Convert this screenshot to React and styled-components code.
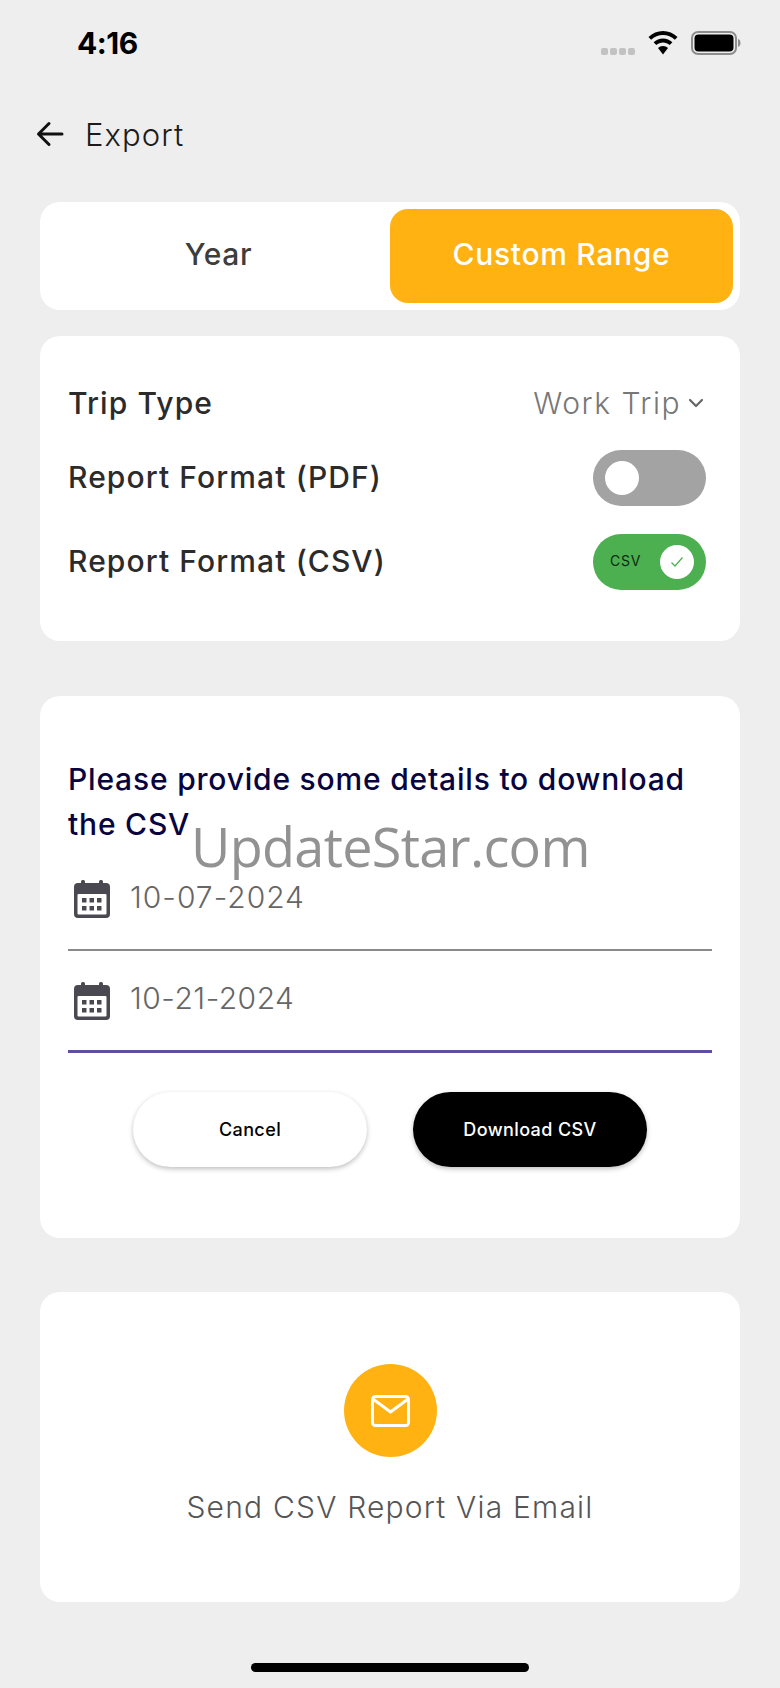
import React from 'react';
import styled, { createGlobalStyle } from 'styled-components';

const GlobalStyle = createGlobalStyle`
	html, body { margin: 0; padding: 0; background: #eeeeee; }
	* { box-sizing: border-box; }
`;

const font = `Inter, "Liberation Sans", sans-serif`;

const Page = styled.div`
	position: relative;
	width: 780px;
	height: 1688px;
	overflow: hidden;
	background: #eeeeee;
	font-family: ${font};
`;

const StatusBar = styled.div`
	display: flex;
	align-items: center;
	justify-content: space-between;
	height: 86px;
	padding: 0 39px 0 77px;
`;

const Time = styled.div`
	font-size: 30px;
	font-weight: 700;
	color: #000;
	letter-spacing: -0.5px;
`;

const StatusIcons = styled.div`
	display: flex;
	align-items: center;
	gap: 13px;
`;

const SignalDots = styled.div`
	display: flex;
	gap: 2px;
	margin-top: 16px;
`;

const SignalDot = styled.span`
	width: 7px;
	height: 7px;
	border-radius: 2px;
	background: #c2c2c2;
`;

const Header = styled.div`
	display: flex;
	align-items: center;
	gap: 21px;
	height: 96px;
	padding-left: 36px;
	margin-bottom: 20px;
`;

const HeaderTitle = styled.div`
	font-size: 31px;
	font-weight: 300;
	color: #1b1b1b;
	letter-spacing: 1.1px;
`;

const Content = styled.div`
	display: flex;
	flex-direction: column;
	padding: 0 40px;
`;

const Card = styled.div`
	background: #fff;
	border-radius: 20px;
	padding: ${(p) => p.$padding};
	margin-bottom: ${(p) => p.$gap || 0}px;
`;

const TabCard = styled(Card)`
	display: grid;
	grid-template-columns: 343px 343px;
	justify-content: space-between;
	height: 108px;
	padding: 7px;
`;

const Tab = styled.div`
	display: flex;
	align-items: center;
	justify-content: center;
	padding-bottom: 4px;
	border-radius: 18px;
	font-size: 30px;
	font-weight: 500;
	letter-spacing: 0.7px;
	background: ${(p) => (p.$active ? '#ffb212' : 'transparent')};
	color: ${(p) => (p.$active ? '#fff' : '#3d3d3d')};
`;

const Row = styled.div`
	display: flex;
	align-items: center;
	justify-content: space-between;
	height: 56px;
	margin-bottom: ${(p) => p.$gap}px;
`;

const RowLabel = styled.div`
	font-size: 30px;
	font-weight: 500;
	color: #2b2b2b;
	letter-spacing: 1.1px;
	margin-top: ${(p) => p.$shift || 0}px;
`;

const Select = styled.div`
	display: flex;
	align-items: center;
	gap: 7px;
	margin-right: 8px;
	font-size: 30px;
	font-weight: 300;
	color: #777;
	letter-spacing: 1.5px;
`;

const Toggle = styled.div`
	display: flex;
	align-items: center;
	justify-content: ${(p) => (p.$on ? 'space-between' : 'flex-start')};
	width: 113px;
	height: 56px;
	margin-right: 6px;
	padding: 0 12px 0 ${(p) => (p.$on ? 17 : 12)}px;
	border-radius: 28px;
	background: ${(p) => (p.$on ? '#4caf50' : '#a3a3a3')};
`;

const ToggleLabel = styled.span`
	font-size: 14px;
	color: #0b2b0f;
	letter-spacing: 0.8px;
	margin-top: -3px;
`;

const Knob = styled.div`
	display: flex;
	align-items: center;
	justify-content: center;
	width: 34px;
	height: 34px;
	border-radius: 50%;
	background: #fff;
`;

const Heading = styled.div`
	font-size: 30px;
	line-height: 45px;
	font-weight: 500;
	color: #07043f;
	letter-spacing: 0.8px;
	margin-bottom: 2px;
`;

const DateField = styled.div`
	display: flex;
	align-items: center;
	gap: 20px;
	height: 102px;
	padding-left: 6px;
	border-bottom: ${(p) => (p.$focused ? '3px solid #5f4ea3' : '2px solid #8a8a8a')};
`;

const DateText = styled.div`
	font-size: 30px;
	font-weight: 300;
	color: #666;
	letter-spacing: ${(p) => p.$spacing}px;
	margin-top: -5px;
`;

const ButtonRow = styled.div`
	display: flex;
	justify-content: center;
	gap: 46px;
	margin-top: 39px;
`;

const Button = styled.div`
	display: flex;
	align-items: center;
	justify-content: center;
	width: 234px;
	height: 75px;
	border-radius: 38px;
	font-size: 18px;
	font-weight: 500;
	letter-spacing: 0.4px;
	background: ${(p) => (p.$dark ? '#000' : '#fff')};
	color: ${(p) => (p.$dark ? '#fff' : '#000')};
	box-shadow: 0 2px 5px rgba(0, 0, 0, 0.25);
`;

const EmailCard = styled(Card)`
	display: flex;
	flex-direction: column;
	align-items: center;
	height: 310px;
	padding-top: 72px;
`;

const MailCircle = styled.div`
	display: flex;
	align-items: center;
	justify-content: center;
	width: 93px;
	height: 93px;
	border-radius: 50%;
	background: #ffb212;
`;

const EmailLabel = styled.div`
	margin-top: 32px;
	font-size: 30px;
	font-weight: 300;
	color: #555;
	letter-spacing: 1.2px;
`;

const HomeBar = styled.div`
	position: absolute;
	left: 251px;
	bottom: 16px;
	width: 278px;
	height: 9px;
	border-radius: 5px;
	background: #000;
`;

const Watermark = styled.div`
	position: absolute;
	left: 191px;
	top: 809px;
	font-family: "Open Sans", sans-serif;
	font-size: 54px;
	line-height: 74px;
	letter-spacing: -0.7px;
	color: rgba(110, 110, 110, 0.75);
	pointer-events: none;
`;

const BackArrow = () => (
	<svg width="28" height="26" viewBox="0 0 28 26" fill="none" stroke="#111" strokeWidth="3" strokeLinecap="round" strokeLinejoin="round">
		<path d="M26 13H3M13 2.500 2.500 13 13 23.500" />
	</svg>
);

const Wifi = () => (
	<svg width="30" height="24" viewBox="0 0 30 24">
		<path d="M15 0C9.500 0 4.500 2 .5 6l2.600 2.800C6.300 5.600 10.500 4 15 4s8.700 1.600 11.900 4.800L29.500 6C25.500 2 20.500 0 15 0z" />
		<path d="M15 7.500c-3.500 0-6.800 1.300-9.400 3.800l2.700 2.800C10.100 12.400 12.500 11.500 15 11.500s4.900.9 6.700 2.600l2.700-2.800C21.800 8.800 18.500 7.500 15 7.500z" />
		<path d="M15 15c-2 0-3.600.7-5 2l5 6.500 5-6.500c-1.400-1.300-3-2-5-2z" />
	</svg>
);

const Battery = () => (
	<svg width="50" height="24" viewBox="0 0 50 24">
		<rect x="1" y="1" width="44" height="22" rx="6" fill="none" stroke="#8d8d8d" strokeWidth="2" />
		<rect x="3.500" y="3.500" width="39" height="17" rx="4" fill="#000" />
		<path d="M47 8c1.800.6 2.500 2.200 2.500 4s-.7 3.400-2.500 4z" fill="#8d8d8d" />
	</svg>
);

const Chevron = () => (
	<svg width="16" height="10" viewBox="0 0 16 10" fill="none" stroke="#666" strokeWidth="2.200" strokeLinecap="round" strokeLinejoin="round">
		<path d="M2 2 8 8 14 2" />
	</svg>
);

const Check = () => (
	<svg width="14" height="12" viewBox="0 0 14 12" fill="none" stroke="#4caf50" strokeWidth="1.200">
		<path d="M1.500 6.500 5 10 12.500 1.500" />
	</svg>
);

const Calendar = () => (
	<svg width="36" height="38" viewBox="0 0 36 38">
		<rect x="7" y="0" width="4" height="7" rx="1.500" fill="#4a4850" />
		<rect x="25" y="0" width="4" height="7" rx="1.500" fill="#4a4850" />
		<rect x="0" y="3" width="36" height="35" rx="4" fill="#4a4850" />
		<rect x="3.500" y="14" width="29" height="20.500" rx="1" fill="#fff" />
		{[8, 15.5, 23].map((x) => [18, 26].map((y) => (
			<rect key={`${x}-${y}`} x={x} y={y} width="4.500" height="4.500" fill="#4a4850" />
		)))}
	</svg>
);

const Mail = () => (
	<svg width="39" height="32" viewBox="0 0 39 32" fill="none" stroke="#fff" strokeWidth="3" strokeLinejoin="round">
		<rect x="1.500" y="1.500" width="36" height="29" rx="3" />
		<path d="M2 4 19.500 17 37 4" />
	</svg>
);

export default function App() {
	return (
		<Page>
			<GlobalStyle />
			<StatusBar>
				<Time>4:16</Time>
				<StatusIcons>
					<SignalDots>
						<SignalDot />
						<SignalDot />
						<SignalDot />
						<SignalDot />
					</SignalDots>
					<Wifi />
					<Battery />
				</StatusIcons>
			</StatusBar>
			<Header>
				<BackArrow />
				<HeaderTitle>Export</HeaderTitle>
			</Header>
			<Content>
				<TabCard $gap={26}>
					<Tab>Year</Tab>
					<Tab $active>Custom Range</Tab>
				</TabCard>
				<Card $padding="39px 28px 51px" $gap={55}>
					<Row $gap={19}>
						<RowLabel>Trip Type</RowLabel>
						<Select>Work Trip<Chevron /></Select>
					</Row>
					<Row $gap={28}>
						<RowLabel $shift={-3}>Report Format (PDF)</RowLabel>
						<Toggle><Knob /></Toggle>
					</Row>
					<Row $gap={0}>
						<RowLabel $shift={-3}>Report Format (CSV)</RowLabel>
						<Toggle $on>
							<ToggleLabel>CSV</ToggleLabel>
							<Knob><Check /></Knob>
						</Toggle>
					</Row>
				</Card>
				<Card $padding="61px 28px 71px" $gap={54}>
					<Heading>Please provide some details to download the CSV</Heading>
					<DateField>
						<Calendar />
						<DateText $spacing={1}>10-07-2024</DateText>
					</DateField>
					<DateField $focused>
						<Calendar />
						<DateText $spacing={0.5}>10-21-2024</DateText>
					</DateField>
					<ButtonRow>
						<Button>Cancel</Button>
						<Button $dark>Download CSV</Button>
					</ButtonRow>
				</Card>
				<EmailCard>
					<MailCircle><Mail /></MailCircle>
					<EmailLabel>Send CSV Report Via Email</EmailLabel>
				</EmailCard>
			</Content>
			<Watermark>UpdateStar.com</Watermark>
			<HomeBar />
		</Page>
	);
}
